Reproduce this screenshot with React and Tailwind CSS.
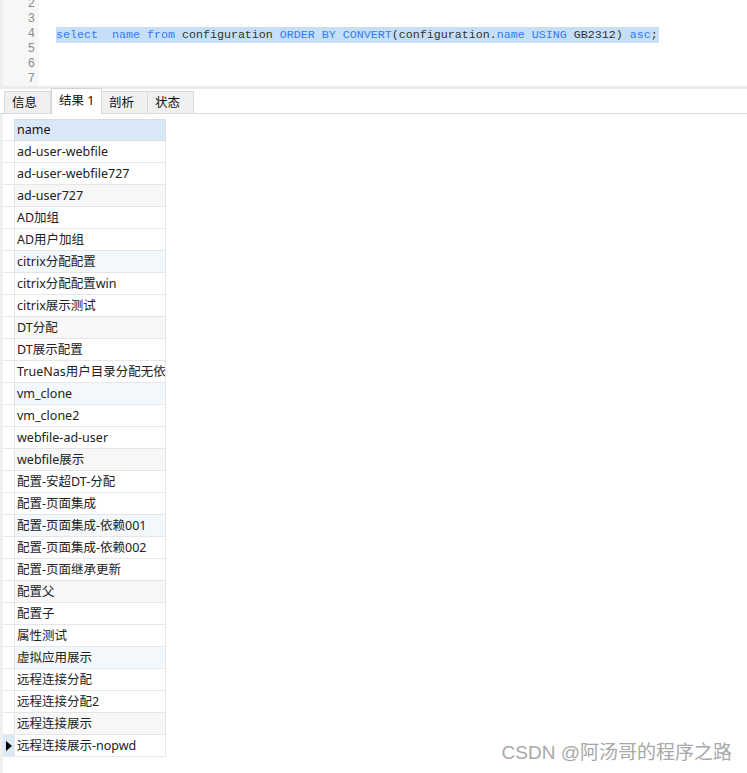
import React from 'react';

const rows = [
  'ad-user-webfile',
  'ad-user-webfile727',
  'ad-user727',
  'AD加组',
  'AD用户加组',
  'citrix分配配置',
  'citrix分配配置win',
  'citrix展示测试',
  'DT分配',
  'DT展示配置',
  'TrueNas用户目录分配无依赖',
  'vm_clone',
  'vm_clone2',
  'webfile-ad-user',
  'webfile展示',
  '配置-安超DT-分配',
  '配置-页面集成',
  '配置-页面集成-依赖001',
  '配置-页面集成-依赖002',
  '配置-页面继承更新',
  '配置父',
  '配置子',
  '属性测试',
  '虚拟应用展示',
  '远程连接分配',
  '远程连接分配2',
  '远程连接展示',
  '远程连接展示-nopwd',
];

const tabs = [
  { label: '信息', w: 'w-[47px]' },
  { label: '结果 1', w: 'w-[51px]', active: true },
  { label: '剖析', w: 'w-[47px]' },
  { label: '状态', w: 'w-[47px]' },
];

const ui = { fontFamily: '"Noto Sans", "Noto Sans CJK SC", sans-serif' };
const mono = { fontFamily: '"Liberation Mono", "DejaVu Sans Mono", monospace' };

function rowBg(i) {
  if (i % 3 !== 2) return 'bg-white';
  return Math.floor(i / 3) % 2 === 0 ? 'bg-[#f7f7f7]' : 'bg-[#f3f8fd]';
}

export default function App() {
  return (
    <div className="w-[747px] h-[773px] bg-white overflow-hidden relative text-[#222]" style={ui}>
      {/* editor */}
      <div className="flex h-[86px] overflow-hidden">
        <div className="w-[39px] shrink-0 bg-[#f7f7f7] border-l-[3px] border-[#eeeeee] pr-[4px] text-right text-[12px] text-[#8a8a8a]" style={mono}>
          <div className="-mt-[3px]">
            {[2, 3, 4, 5, 6, 7].map((n) => (
              <div key={n} className="h-[15px] leading-[15px]">{n}</div>
            ))}
          </div>
        </div>
        <div className="pl-[17px] pt-[27px] text-[11.67px] leading-[16px]" style={mono}>
          <div className="inline-block bg-[#c6dff7] whitespace-pre pr-[1px]">
            <span className="text-[#2f7cf6]">select  name from</span>
            <span className="text-[#333]"> configuration </span>
            <span className="text-[#2f7cf6]">ORDER BY CONVERT</span>
            <span className="text-[#333]">(configuration.</span>
            <span className="text-[#2f7cf6]">name USING</span>
            <span className="text-[#333]"> GB2312) </span>
            <span className="text-[#2f7cf6]">asc</span>
            <span className="text-[#333]">;</span>
          </div>
        </div>
      </div>
      <div className="h-[3px] bg-[#ececec]" />

      {/* tabs */}
      <div className="flex items-end h-[25px] pl-[4px] border-b border-[#d9d9d9]">
        {tabs.map((t) =>
          t.active ? (
            <div key={t.label} className={`${t.w} h-[26px] -mb-[1px] bg-white border border-b-0 border-[#d4d4d4] pl-[7px] pt-[3px] text-[12.5px] text-[#111]`}>
              {t.label}
            </div>
          ) : (
            <div key={t.label} className={`${t.w} h-[22px] bg-[#f0f0f0] border border-b-0 border-[#dadada] -ml-px first:ml-0 pl-[7px] pt-[3px] text-[12.5px] text-[#111] leading-[16px]`}>
              {t.label}
            </div>
          )
        )}
      </div>

      {/* result grid */}
      <div className="flex h-[660px]">
        <div className="w-[3px] shrink-0 bg-[#efefef]" />
        <div className="pt-[5px]">
          <div className="flex h-[22px]">
            <div className="w-[11px] bg-white border-b border-[#e6e6e6]" />
            <div className="w-[152px] bg-[#d8e8f7] border border-[#dcdcdc] pl-[2px] text-[12.5px] leading-[20px] text-[#111]">name</div>
          </div>
          {rows.map((r, i) => {
            const last = i === rows.length - 1;
            return (
              <div key={r} className="flex h-[22px]">
                <div className={`w-[11px] border-b border-[#e6e6e6] flex items-center justify-center ${last ? 'bg-[#dbe8f6]' : 'bg-white'}`}>
                  {last && (
                    <svg width="6" height="10" viewBox="0 0 6 10">
                      <path d="M0 0 L6 5 L0 10 Z" fill="#000" />
                    </svg>
                  )}
                </div>
                <div className={`w-[152px] border-x border-b border-[#e6e6e6] pl-[2px] text-[12.5px] leading-[21px] whitespace-nowrap overflow-hidden ${rowBg(i)}`}>
                  {r}
                </div>
              </div>
            );
          })}
        </div>
      </div>

      <div className="absolute right-[15px] bottom-[6px] text-[19px] text-[#a8a8a8]" style={{ fontFamily: '"Liberation Sans", "Noto Sans CJK SC", sans-serif' }}>
        CSDN @阿汤哥的程序之路
      </div>
    </div>
  );
}
